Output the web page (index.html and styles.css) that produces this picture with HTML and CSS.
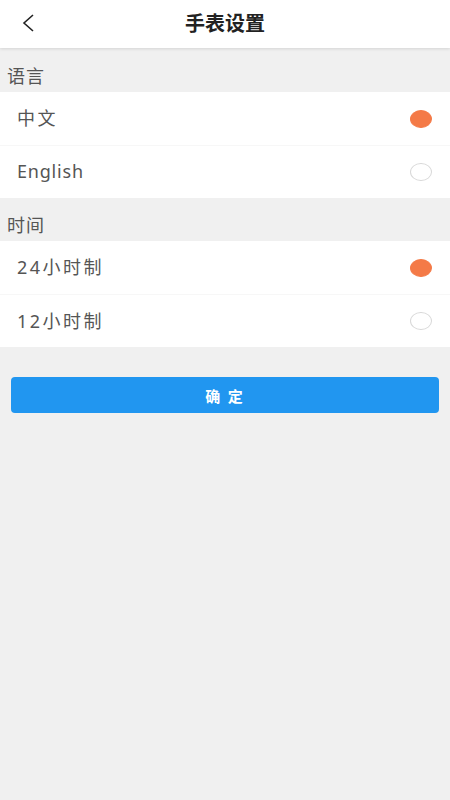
FILE: index.html
```html
<!DOCTYPE html>
<html lang="zh-CN">
<head>
    <meta charset="UTF-8">
    <meta name="viewport" content="width=device-width, initial-scale=1.0">
    <title>手表设置</title>
    <link rel="stylesheet" href="styles.css">
</head>
<body>
    <div class="header">
        <span class="back">
            <svg width="14" height="20" viewBox="0 0 14 20">
                <path d="M12 2 L3 10 L12 18" fill="none" stroke="#222" stroke-width="1.6"/>
            </svg>
        </span>
        <h1>手表设置</h1>
    </div>

    <div class="section-title">语言</div>
    <div class="group">
        <div class="row">
            <span class="label">中文</span>
            <span class="radio checked"></span>
        </div>
        <div class="row">
            <span class="label latin">English</span>
            <span class="radio"></span>
        </div>
    </div>

    <div class="section-title">时间</div>
    <div class="group">
        <div class="row">
            <span class="label">24小时制</span>
            <span class="radio checked"></span>
        </div>
        <div class="row">
            <span class="label">12小时制</span>
            <span class="radio"></span>
        </div>
    </div>

    <button class="confirm">确 定</button>
</body>
</html>
```

FILE: styles.css
```css
body {
    margin: 0;
    background-color: #f0f0f0;
    font-family: "Noto Sans", "Noto Sans CJK SC", sans-serif;
    color: #555;
}
.header {
    height: 48px;
    background-color: white;
    display: flex;
    align-items: center;
    justify-content: center;
    position: relative;
    box-shadow: 0 1px 3px rgba(0,0,0,0.12);
}
.back {
    position: absolute;
    left: 21px;
    top: 13px;
}
h1 {
    margin: 0 0 4px;
    font-size: 20px;
    font-weight: bold;
    color: #222;
    font-family: "Noto Sans CJK SC", sans-serif;
}
.section-title {
    height: 44px;
    line-height: 54px;
    padding-left: 7px;
    font-size: 18px;
    letter-spacing: 1px;
    color: #555;
    font-family: "Noto Sans CJK SC", sans-serif;
}
.group + .section-title {
    height: 43px;
    line-height: 52px;
}
.group {
    background-color: white;
}
.row {
    height: 53px;
    box-sizing: border-box;
    display: flex;
    align-items: center;
    justify-content: space-between;
    padding: 0 18px 0 17px;
    font-size: 18px;
    letter-spacing: 2.5px;
    font-family: "Noto Sans", "Noto Sans CJK SC", sans-serif;
}
.row + .row {
    border-top: 1px solid #f7f7f7;
}
.label {
    margin-bottom: 3px;
}
.row .latin {
    letter-spacing: 0.8px;
}
.radio {
    width: 22px;
    height: 18px;
    border-radius: 50%;
    border: 1px solid #d8d8d8;
    box-sizing: border-box;
}
.radio.checked {
    background-color: #f47a47;
    border-color: #f47a47;
}
.confirm {
    display: block;
    margin: 30px 11px 0;
    width: calc(100% - 22px);
    height: 36px;
    background-color: #2196f0;
    color: white;
    border: none;
    border-radius: 4px;
    font-size: 15px;
    font-weight: bold;
    font-family: "Noto Sans CJK SC", sans-serif;
    letter-spacing: 2px;
}
```
